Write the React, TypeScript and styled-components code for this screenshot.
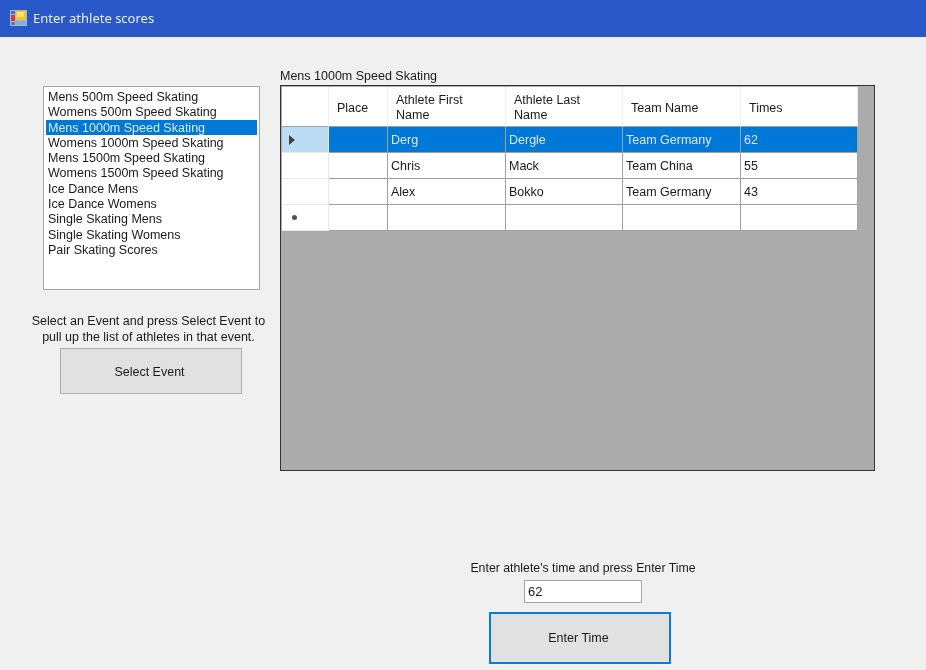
import React from "react";
import styled, { createGlobalStyle } from "styled-components";

const Global = createGlobalStyle`
  html, body { margin: 0; padding: 0; background: #f0f0f0; }
  body { font-family: "Liberation Sans", Arial, sans-serif; font-size: 12.5px; color: #1a1a1a; }
`;

const Window = styled.div`
  width: 926px;
  height: 670px;
  overflow: hidden;
  background: #f0f0f0;
  display: flex;
  flex-direction: column;
  filter: blur(0.4px);
`;

const TitleBar = styled.header`
  box-sizing: border-box;
  height: 37px;
  flex: none;
  background: #2a58c8;
  color: #e8eefa;
  display: flex;
  align-items: center;
  gap: 6px;
  padding: 0 0 1px 10px;
  font-family: "Noto Sans", sans-serif;
  font-size: 13px;
`;

const Main = styled.main`
  display: grid;
  grid-template-columns: 217px 595px;
  column-gap: 20px;
  padding: 31px 0 0 43px;
`;

const LeftColumn = styled.section`
  padding-top: 18px;
  display: flex;
  flex-direction: column;
  align-items: center;
`;

const ListBox = styled.ul`
  list-style: none;
  box-sizing: border-box;
  width: 217px;
  height: 204px;
  margin: 0;
  padding: 2px 2px;
  background: #fff;
  border: 1px solid #a5a5a5;
`;

const ListItem = styled.li<{ $selected?: boolean }>`
  height: 15.3px;
  line-height: 17px;
  padding-left: 2px;
  white-space: nowrap;
  background: ${(p) => (p.$selected ? "#0078d7" : "transparent")};
  color: ${(p) => (p.$selected ? "#dbe9f7" : "#1a1a1a")};
`;

const Hint = styled.p`
  margin: 24px -12px 0 -18px;
  line-height: 15.5px;
  text-align: center;
  white-space: nowrap;
`;

const Button = styled.button<{ $focused?: boolean }>`
  display: block;
  box-sizing: border-box;
  background: #e1e1e1;
  color: #1a1a1a;
  font: inherit;
  padding: 0;
  border: ${(p) => (p.$focused ? "2px solid #0a7ad8" : "1px solid #adadad")};
`;

const SelectButton = styled(Button)`
  align-self: flex-start;
  width: 182px;
  height: 46px;
  margin: 3px 0 0 17px;
  padding: 1px 3px 0 0;
`;

const RightColumn = styled.section`
  display: flex;
  flex-direction: column;
`;

const GridTitle = styled.div`
  height: 17px;
  line-height: 17px;
  white-space: nowrap;
`;

const DataGrid = styled.div`
  box-sizing: border-box;
  width: 595px;
  height: 386px;
  padding: 1px;
  background: #ababab;
  border: 1px solid #333;
`;

const Row = styled.div<{ $header?: boolean }>`
  display: grid;
  grid-template-columns: 47px 59px 118px 117px 118px 117px;
  width: 576px;
  height: ${(p) => (p.$header ? "40px" : "26px")};
  background: #fff;
`;

const HeaderCell = styled.div`
  box-sizing: border-box;
  display: flex;
  align-items: center;
  padding: 3px 0 0 8px;
  line-height: 15px;
  background: #fff;
  border-right: 1px solid #f0f0f0;
  border-bottom: 1px solid #a0a0a0;
`;

const RowHeader = styled.div<{ $active?: boolean }>`
  box-sizing: border-box;
  display: flex;
  align-items: center;
  padding-left: 7px;
  background: ${(p) => (p.$active ? "#bcdcf4" : "#fff")};
  border-right: 1px solid #e8e8e8;
  border-bottom: 1px solid #e8e8e8;
`;

const Cell = styled.div<{ $selected?: boolean }>`
  box-sizing: border-box;
  display: flex;
  align-items: center;
  padding-left: 3px;
  white-space: nowrap;
  background: ${(p) => (p.$selected ? "#0078d7" : "#fff")};
  color: ${(p) => (p.$selected ? "#dbe9f7" : "#1a1a1a")};
  border-right: 1px solid #a0a0a0;
  border-bottom: 1px solid #a0a0a0;
`;

const Arrow = styled.svg`
  width: 6px;
  height: 10px;
  fill: #404040;
`;

const NewRowMark = styled.span`
  width: 5px;
  height: 5px;
  margin-left: 3px;
  border-radius: 50%;
  background: #505050;
`;

const EntrySection = styled.section`
  margin: 89px 0 0 489px;
  width: 182px;
  display: flex;
  flex-direction: column;
  align-items: center;
`;

const EntryLabel = styled.label`
  height: 16px;
  line-height: 17px;
  margin-left: 6px;
  font-size: 12.3px;
  white-space: nowrap;
`;

const TimeInput = styled.input`
  box-sizing: border-box;
  display: block;
  width: 118px;
  height: 23px;
  margin: 4px 0 0 6px;
  padding: 0 0 0 3px;
  border: 1px solid #a5a5a5;
  background: #fff;
  font: inherit;
  font-size: 13px;
  color: #1a1a1a;
`;

const EnterButton = styled(Button)`
  width: 182px;
  height: 52px;
  margin-top: 9px;
  padding-right: 3px;
`;

const events = [
  "Mens 500m Speed Skating",
  "Womens 500m Speed Skating",
  "Mens 1000m Speed Skating",
  "Womens 1000m Speed Skating",
  "Mens 1500m Speed Skating",
  "Womens 1500m Speed Skating",
  "Ice Dance Mens",
  "Ice Dance Womens",
  "Single Skating Mens",
  "Single Skating Womens",
  "Pair Skating Scores",
];

const athletes = [
  ["", "Derg", "Dergle", "Team Germany", "62"],
  ["", "Chris", "Mack", "Team China", "55"],
  ["", "Alex", "Bokko", "Team Germany", "43"],
  ["", "", "", "", ""],
];

const AppIcon = () => (
  <svg width="17" height="16" viewBox="0 0 17 16" aria-hidden="true">
    <rect x="0" y="0" width="17" height="16" fill="#a9b4c9" />
    <rect x="1" y="1" width="4" height="3" fill="#4f6fb5" />
    <rect x="1" y="5" width="4" height="6" fill="#cf3b3b" />
    <rect x="1" y="12" width="4" height="3" fill="#5a79bb" />
    <rect x="6" y="1" width="10" height="9" fill="#f6c22e" />
    <rect x="7" y="2" width="7" height="5" fill="#fbe27a" />
    <rect x="6" y="11" width="10" height="4" fill="#7fb0e8" />
  </svg>
);

export default function App() {
  return (
    <Window>
      <Global />
      <TitleBar>
        <AppIcon />
        Enter athlete scores
      </TitleBar>
      <Main>
        <LeftColumn>
          <ListBox>
            {events.map((e) => (
              <ListItem key={e} $selected={e === "Mens 1000m Speed Skating"}>
                {e}
              </ListItem>
            ))}
          </ListBox>
          <Hint>
            Select an Event and press Select Event to
            <br />
            pull up the list of athletes in that event.
          </Hint>
          <SelectButton>Select Event</SelectButton>
        </LeftColumn>
        <RightColumn>
          <GridTitle>Mens 1000m Speed Skating</GridTitle>
          <DataGrid>
            <Row $header>
              <HeaderCell />
              <HeaderCell>Place</HeaderCell>
              <HeaderCell>
                Athlete First
                <br />
                Name
              </HeaderCell>
              <HeaderCell>
                Athlete Last
                <br />
                Name
              </HeaderCell>
              <HeaderCell>Team Name</HeaderCell>
              <HeaderCell>Times</HeaderCell>
            </Row>
            {athletes.map((a, i) => (
              <Row key={i}>
                <RowHeader $active={i === 0}>
                  {i === 0 && (
                    <Arrow viewBox="0 0 6 10" aria-hidden="true">
                      <path d="M0 0 L6 5 L0 10 Z" />
                    </Arrow>
                  )}
                  {i === 3 && <NewRowMark />}
                </RowHeader>
                {a.map((c, j) => (
                  <Cell key={j} $selected={i === 0}>
                    {c}
                  </Cell>
                ))}
              </Row>
            ))}
          </DataGrid>
        </RightColumn>
      </Main>
      <EntrySection>
        <EntryLabel>Enter athlete's time and press Enter Time</EntryLabel>
        <TimeInput defaultValue="62" />
        <EnterButton $focused>Enter Time</EnterButton>
      </EntrySection>
    </Window>
  );
}
